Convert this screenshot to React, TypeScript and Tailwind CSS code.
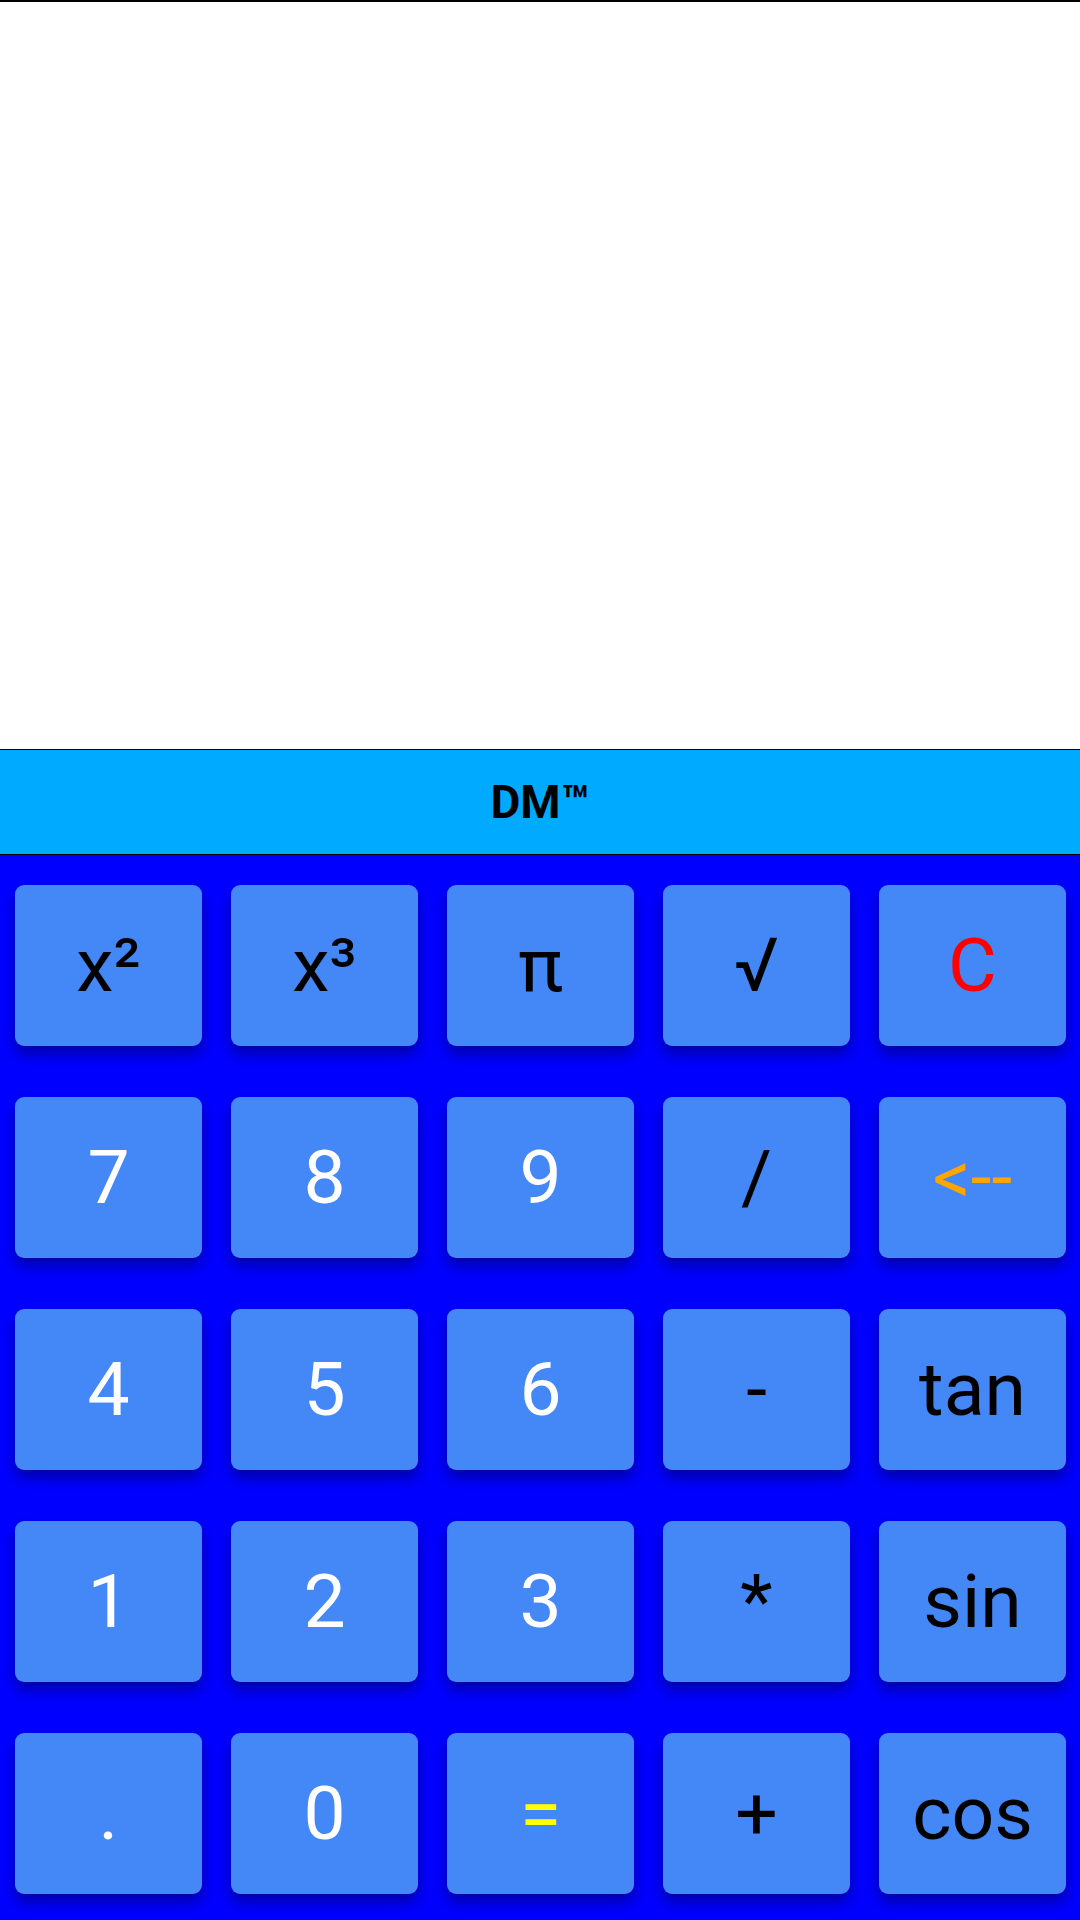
import React from "react";

interface Key {
  label: string;
  color: string;
}

// keypad rows, left to right, top to bottom
const keys: Key[] = [
  { label: "x²", color: "text-black" },
  { label: "x³", color: "text-black" },
  { label: "π", color: "text-black" },
  { label: "√", color: "text-black" },
  { label: "C", color: "text-[#ff0000]" },
  { label: "7", color: "text-white" },
  { label: "8", color: "text-white" },
  { label: "9", color: "text-white" },
  { label: "/", color: "text-black" },
  { label: "<--", color: "text-[#ffa500]" },
  { label: "4", color: "text-white" },
  { label: "5", color: "text-white" },
  { label: "6", color: "text-white" },
  { label: "-", color: "text-black" },
  { label: "tan", color: "text-black" },
  { label: "1", color: "text-white" },
  { label: "2", color: "text-white" },
  { label: "3", color: "text-white" },
  { label: "*", color: "text-black" },
  { label: "sin", color: "text-black" },
  { label: ".", color: "text-white" },
  { label: "0", color: "text-white" },
  { label: "=", color: "text-[#ffff00]" },
  { label: "+", color: "text-black" },
  { label: "cos", color: "text-black" },
];

const App: React.FC = () => {
  return (
    <div
      className="flex flex-col w-[1080px] h-[1920px] overflow-hidden"
      style={{ fontFamily: "Roboto, 'Noto Sans', sans-serif" }}
    >
      {/* Display */}
      <div className="h-[749px] bg-white border-t-2 border-black" />

      {/* Title bar */}
      <div className="h-[106px] flex items-center justify-center bg-[#00aaff] border-y border-black">
        <span className="text-[46px] font-bold text-black leading-none">
          DM™
        </span>
      </div>

      {/* Keypad */}
      <div className="flex-1 bg-[#0000ff] pl-[15px] pt-[30px]">
        <div className="grid grid-cols-[repeat(5,187px)] auto-rows-[161px] gap-x-[29px] gap-y-[51px]">
          {keys.map((key, index) => (
            <button
              key={index}
              className={`flex items-center justify-center rounded-[9px] bg-[#4487f6] shadow-[0_8px_14px_rgba(0,0,60,0.45)] text-[75px] leading-none ${key.color}`}
            >
              {key.label}
            </button>
          ))}
        </div>
      </div>
    </div>
  );
};

export default App;
